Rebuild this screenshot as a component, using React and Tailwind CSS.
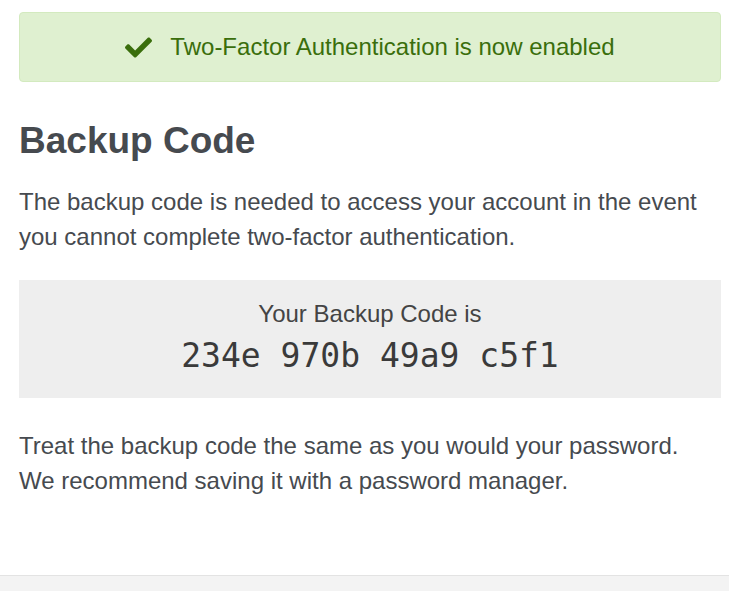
import { FaCheck } from "react-icons/fa";

export default function App() {
  return (
    <div className="min-h-[591px] bg-white flex flex-col text-[#464a4f]" style={{ fontFamily: '"Liberation Sans", Arial, sans-serif' }}>
      <div className="flex-1 pl-[19px] pr-[8px] pt-[12px]">
        <div className="h-[70px] rounded border border-[#d3eabf] bg-[#dff0d0] flex items-center justify-center gap-[18px] text-[#3a6e0c] text-[24px]">
          <FaCheck className="w-[27px] h-[27px]" />
          <span>Two-Factor Authentication is now enabled</span>
        </div>

        <h1 className="mt-[37px] text-[37px] leading-[43px] font-bold text-[#464a4f]">Backup Code</h1>

        <p className="mt-[22px] text-[24px] leading-[35px]">
          The backup code is needed to access your account in the event<br />
          you cannot complete two-factor authentication.
        </p>

        <div className="mt-[26px] bg-[#eeeeee] pt-[16px] pb-[22px] text-center">
          <div className="text-[24px] leading-[35px] text-[#444]">Your Backup Code is</div>
          <div className="mt-[5px] text-[33px] leading-[40px] text-[#3a3a3a]" style={{ fontFamily: '"DejaVu Sans Mono", monospace' }}>
            234e 970b 49a9 c5f1
          </div>
        </div>

        <p className="mt-[30px] text-[24px] leading-[35px]">
          Treat the backup code the same as you would your password.<br />
          We recommend saving it with a password manager.
        </p>
      </div>
      <div className="h-[16px] bg-[#f3f3f3] border-t border-[#e3e3e3]" />
    </div>
  );
}
